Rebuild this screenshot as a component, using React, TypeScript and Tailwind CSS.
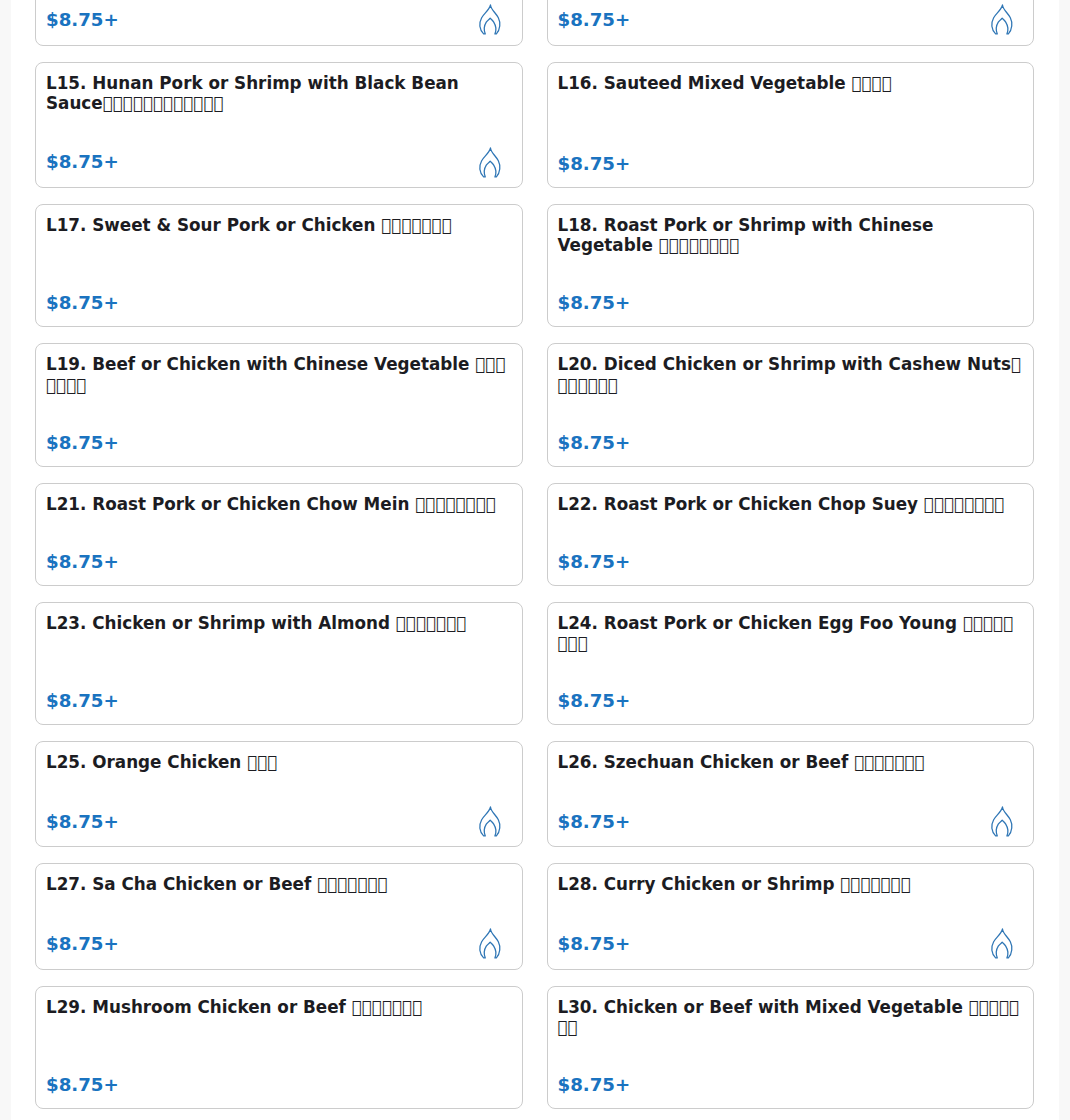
const FONT = "font-['DejaVu_Sans',sans-serif]";
const box = (n: number) => Array(n).fill("\uE000").join("\u200B");

type Item = { t: string; n: number; f?: boolean; sep?: string };

const rows: Item[][] = [
  [{ t: "L13. Filler", n: 4, f: true }, { t: "L14. Filler", n: 4, f: true }],
  [{ t: "L15. Hunan Pork or Shrimp with Black Bean Sauce", n: 12, f: true, sep: "" }, { t: "L16. Sauteed Mixed Vegetable", n: 4 }],
  [{ t: "L17. Sweet & Sour Pork or Chicken", n: 7 }, { t: "L18. Roast Pork or Shrimp with Chinese Vegetable", n: 8 }],
  [{ t: "L19. Beef or Chicken with Chinese Vegetable", n: 7 }, { t: "L20. Diced Chicken or Shrimp with Cashew Nuts", n: 7, sep: "" }],
  [{ t: "L21. Roast Pork or Chicken Chow Mein", n: 8 }, { t: "L22. Roast Pork or Chicken Chop Suey", n: 8 }],
  [{ t: "L23. Chicken or Shrimp with Almond", n: 7 }, { t: "L24. Roast Pork or Chicken Egg Foo Young", n: 8 }],
  [{ t: "L25. Orange Chicken", n: 3, f: true }, { t: "L26. Szechuan Chicken or Beef", n: 7, f: true }],
  [{ t: "L27. Sa Cha Chicken or Beef", n: 7, f: true }, { t: "L28. Curry Chicken or Shrimp", n: 7, f: true }],
  [{ t: "L29. Mushroom Chicken or Beef", n: 7 }, { t: "L30. Chicken or Beef with Mixed Vegetable", n: 7 }],
];

function Flame() {
  return (
    <svg viewBox="0 0 24 32" className="w-[24px] h-[31.4px] shrink-0" fill="none" stroke="#2f76b5" strokeWidth="1.3" strokeLinecap="round" strokeLinejoin="round">
      <path d="M12.5 1 C13 6 18 9 20.5 14 C23 19 22.5 26 18.5 30.5 L17 30.5 C18.5 27 18 22 15.8 18.5 C14.5 16.5 13 15.5 12.2 14.5 C11.2 15.5 9.5 16.5 8.2 18.5 C6 22 5.8 27 7.2 30.5 L5.5 30.5 C1 26 0.5 19.5 3.5 14 C6 9.5 11 6.5 12.5 1 Z" />
    </svg>
  );
}

function Card({ item }: { item: Item }) {
  return (
    <div className="flex flex-col justify-between rounded-lg border border-[#ccc] bg-white px-2.5 pt-2.5 pb-[9px]">
      <h3 className="text-[16.8px] leading-[20.25px] font-bold text-[#1c1c22] mb-[33.75px]">
        {item.t}{item.sep ?? " "}{box(item.n)}
      </h3>
      <div className="flex items-center justify-between">
        <span className="text-[18.2px] leading-[28px] font-bold text-[#1a73c0]">$8.75+</span>
        {item.f && <div className="mr-[9.5px] flex"><Flame /></div>}
      </div>
    </div>
  );
}

export default function App() {
  return (
    <div className={`h-[1120px] overflow-hidden bg-[#f8f8f8] px-[11px] ${FONT}`}>
      <div className="flex flex-col bg-white h-full pl-[24px] pr-[25px]">
        <div className="flex flex-col gap-4 -mt-[60.9px]">
          {rows.map((r, i) => (
            <div key={i} className="grid grid-cols-2 gap-6">
              <Card item={r[0]} />
              <Card item={r[1]} />
            </div>
          ))}
        </div>
      </div>
    </div>
  );
}
